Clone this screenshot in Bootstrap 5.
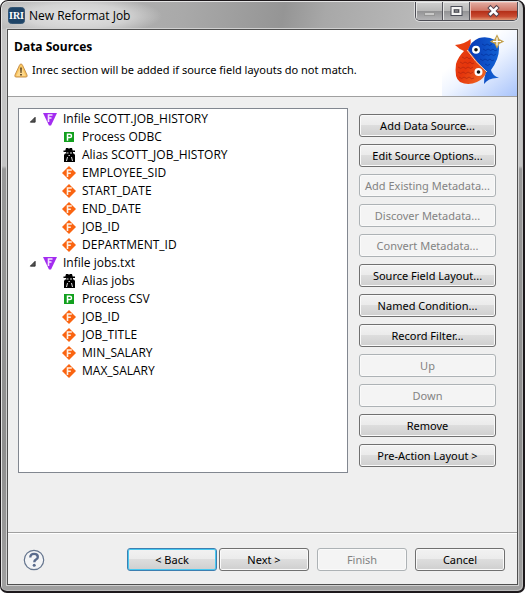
<!DOCTYPE html>
<html lang="en">
<head>
<meta charset="utf-8">
<meta name="viewport" content="width=device-width, initial-scale=1">
<title>New Reformat Job</title>
<link href="https://cdn.jsdelivr.net/npm/bootstrap@5.3.0/dist/css/bootstrap.min.css" rel="stylesheet">
<style>
  body { font-family: "Noto Sans", "Open Sans", sans-serif; font-size: 11px; line-height: 18px; color: #000; background: #fff; }
  .win-frame {
    border: 1px solid #1d191c; border-width: 1px 2px 2px 1px; border-radius: 8px 8px 7px 7px; padding: 0 5px 6px 6px;
    background: linear-gradient(180deg, #c4c4c4 0, #c4c4c4 165px, #999 168px, #8f8f8f 450px, #a0a0a0 100%);
    box-shadow: inset 1px 1px 0 #e4e4e4, inset -1px -1px 0 #bbb; overflow: hidden;
  }
  .title-bar {
    height: 27px; margin: 1px -4px 0 -5px; padding: 0 4px 0 6px; border-radius: 6px 6px 0 0;
    background: radial-gradient(ellipse 85px 20px at 75px 14px, #e2e2e2 0, #e2e2e2aa 60%, #e2e2e200 100%),
      linear-gradient(100deg, #bdbdbd 0, #a9a9a9 35%, #959595 54%, #a8a8a8 62%, #b9b9b9 80%, #c4c4c4 100%);
  }
  .title-text { font-family: "Open Sans", sans-serif; font-size: 12px; }
  .win-controls { height: 19px; border: 1px solid #4d4d55; border-top: 0; border-radius: 0 0 5px 5px; box-shadow: 0 0 0 1px #ddd; overflow: hidden; }
  .win-controls button { width: 27px; border: 0; border-right: 1px solid #55555c; padding: 0; background: linear-gradient(#d0d0d0 0, #b9b9b9 48%, #929294 50%, #b4b4b6 100%); box-shadow: inset 1px 1px 0 #e6e6e6; }
  .win-controls .win-close { width: 47px; border-right: 0; background: linear-gradient(#e2ada3 0, #cf7767 47%, #b32d17 50%, #c84b31 80%, #e09a79 100%); box-shadow: inset 1px 1px 0 #efbdb3; }
  .client { border: 1px solid #505050; background: #efefef; box-shadow: 0 0 0 1px #d0d0d0; }
  .banner { height: 67px; background: #fff; border-bottom: 1px solid #a0a0a0; padding: 8px 0 0 6px; }
  .banner h1 { font-family: "Open Sans", sans-serif; font-size: 12px; line-height: 18px; font-weight: 700; margin: 0 0 5px; }
  .banner-art { width: 75px; height: 66px; margin-top: -8px; }
  .content-area { padding: 11px 21px 59px 10px; gap: 11px; }
  .tree-box { border: 1px solid #828790; background: #fff; padding: 1px 0; min-width: 0; font-family: "Open Sans", sans-serif; font-size: 12px; }
  .tree-box ul { list-style: none; margin: 0; padding: 0; }
  .tree-row { height: 18px; gap: 6px; white-space: nowrap; }
  .tree-root { padding-left: 10px; }
  .tree-leaf { padding-left: 43px; }
  .tree-row svg { width: 14px; height: 14px; flex: none; }
  .twisty { width: 8px; height: 18px; border: 0; padding: 0; background: none; display: flex; align-items: center; }
  .tree-row .twisty svg { width: 7px; height: 7px; }
  .actions { width: 137px; flex: none; gap: 7px; padding-top: 6px; }
  .wbtn {
    height: 23px; padding: 0; font-size: 11px; line-height: 19px; color: #000; border: 1px solid #707070; border-radius: 3px;
    background: linear-gradient(#f2f2f2 0, #ebebeb 49%, #dddddd 50%, #cfcfcf 100%); box-shadow: inset 0 0 0 1px #fafafa; white-space: nowrap;
  }
  .wbtn:disabled { color: #838383; opacity: 1; border-color: #adb2b5; background: #f4f4f4; }
  .wbtn.default { border-color: #3c7fb1; box-shadow: inset 0 0 0 1px #48c8f0; }
  .footer-bar { border-top: 1px solid #a0a0a0; box-shadow: inset 0 1px 0 #fff; padding: 15px 12px 13px 15px; }
  .footer-bar .wbtn { width: 90px; }
  .back-next { gap: 2px; }
  .help-btn { width: 22px; height: 22px; border: 0; padding: 0; background: none; display: flex; }
</style>
<script src="https://cdn.jsdelivr.net/npm/bootstrap@5.3.0/dist/js/bootstrap.bundle.min.js"></script>
</head>
<body>
<svg width="0" height="0" class="position-absolute" aria-hidden="true">
  <symbol id="i-twisty" viewBox="0 0 8 8"><path d="M7 1.500V7H1.500z" fill="#555" stroke="#262626"/></symbol>
  <symbol id="i-infile" viewBox="0 0 14 14"><path d="M0 1h14L8 13.500H6z" fill="#a32cf0"/><path d="M5.500 10V3h4M5.500 6h3" fill="none" stroke="#f4e4ff" stroke-width="1.600"/></symbol>
  <symbol id="i-process" viewBox="0 0 14 14"><path d="M2 2h10v10H2z" fill="#12a01e"/><path d="M5.500 10.800V4.200h2.300a1.700 1.700 0 0 1 0 3.400H5.500" fill="none" stroke="#fff" stroke-width="1.500"/></symbol>
  <symbol id="i-alias" viewBox="0 0 14 14"><path d="M4 0h2l1 .7L8 0h2l.7 2.500H13V4h-2v1.500h1L13 7v7H2V7l1-1.500h1V4H1.500V2.500h1.800z" fill="#000"/><path d="M4.500 4.500h2v1h-2zM8 4.500h2v1H8zM6.300 7h1.700l-.3 1h-1zM5 9h1l-1 4H4zM9 9h1l1 4h-1z" fill="#ddd"/></symbol>
  <symbol id="i-field" viewBox="0 0 14 14"><path d="M7 0l7 7-7 7-7-7z" fill="#fa6411"/><path d="M5.500 11V4h4.300M5.500 7.200h3.300" fill="none" stroke="#fff0e4" stroke-width="1.600"/></symbol>
</svg>

<div class="win-frame min-vh-100 d-flex flex-column">
  <header class="title-bar d-flex align-items-start flex-shrink-0">
    <div class="d-flex align-items-center align-self-stretch flex-grow-1 gap-1">
      <svg width="17" height="17" viewBox="0 0 17 17" role="img" aria-label="IRI"><rect x=".5" y=".5" width="16" height="16" rx="3" fill="#1e4467" stroke="#345674"/><text x="8.500" y="12" text-anchor="middle" font-family="Liberation Serif, serif" font-weight="700" font-size="10" fill="#fff">IRI</text></svg>
      <span class="title-text">New Reformat Job</span>
    </div>
    <div class="win-controls d-flex">
      <button type="button" aria-label="Minimize"><svg class="d-block mx-auto" width="13" height="14" viewBox="0 0 13 14"><rect x="1.500" y="8.500" width="10" height="3" fill="#c9c9c9" stroke="#969696"/></svg></button>
      <button type="button" aria-label="Maximize"><svg class="d-block mx-auto" width="13" height="14" viewBox="0 0 13 14"><rect x="2.500" y="4" width="8" height="6" fill="none" stroke="#4a4c57" stroke-width="4"/><rect x="2.500" y="4" width="8" height="6" fill="#888" stroke="#f5f5f5" stroke-width="2"/><rect x="4.500" y="6" width="4" height="2" fill="#aaa" stroke="#4a4c57"/></svg></button>
      <button type="button" class="win-close" aria-label="Close"><svg class="d-block mx-auto" width="13" height="14" viewBox="0 0 13 14"><path d="M3.500 4l6 6M9.500 4l-6 6" stroke="#53434e" stroke-width="4.500" stroke-linecap="square"/><path d="M3.500 4l6 6M9.500 4l-6 6" stroke="#fff" stroke-width="2.600" stroke-linecap="square"/></svg></button>
    </div>
  </header>

  <main class="client d-flex flex-column flex-grow-1">
    <section class="banner d-flex justify-content-between">
      <div>
        <h1>Data Sources</h1>
        <div class="d-flex align-items-center gap-1">
          <svg width="14" height="15" viewBox="0 0 14 15" aria-hidden="true"><path d="M7 1Q8 1 8.500 2.200L13 12q.7 2-1 2H2q-1.700 0-1-2L5.500 2.200Q6 1 7 1z" fill="#fbc75e" stroke="#c8914c"/><path d="M7 3L2.500 13h9z" fill="#fff" opacity=".3"/><path d="M6.200 4.500h1.600L7.500 10h-1zM6.200 11h1.600v1.600H6.200z" fill="#4c3413"/></svg>
          <span>Inrec section will be added if source field layouts do not match.</span>
        </div>
      </div>
      <svg class="banner-art flex-shrink-0" viewBox="0 0 75 66" aria-hidden="true">
        <defs>
          <linearGradient id="sky" x1=".4" y1=".3" x2="1" y2="1"><stop offset="0" stop-color="#fff"/><stop offset=".3" stop-color="#eef4ff"/><stop offset="1" stop-color="#a9c4fb"/></linearGradient>
          <linearGradient id="redfish" x1="0" y1="0" x2="1" y2="1"><stop offset="0" stop-color="#ea4412"/><stop offset=".5" stop-color="#e5350c"/><stop offset="1" stop-color="#f37227"/></linearGradient>
          <linearGradient id="bluefish" x1="0" y1="0" x2="1" y2="0"><stop offset="0" stop-color="#0838b4"/><stop offset="1" stop-color="#1262d4"/></linearGradient>
        </defs>
        <path d="M0 0h75v66H0z" fill="url(#sky)"/>
        <path d="M13 15q10-1 15.500-6 1 6-2.500 11 8 11 19 21-3 8-10 11-9 4-17 0-6-4-4-18 2-7 8-13-5-2-9-6z" fill="url(#redfish)"/>
        <path d="M26 20q3-9 11-12 9-2 16 2 4 2 4 9 0 10-8 21 1 5 8 8-10-1-15 6 0-7 2-12Q35 32 26 20z" fill="url(#bluefish)"/>
        <path d="M25 20q8 12 20 22" fill="none" stroke="#ffd9ae" stroke-width="1"/>
        <g fill="none" stroke="#a9210d" stroke-width="1" opacity=".6"><path d="M20 27q3 3 5 0q2 3 4 1M18 32q3 3 5 0q3 3 5 0q2 3 4 1M16 37q3 3 5 0q3 3 5 0q3 3 5 0M16 42q3 3 5 0q3 3 5 0q3 3 5 0M17 47q3 3 5 0q3 3 5 0q3 3 5 1"/></g>
        <g fill="none" stroke="#002c92" stroke-width="1" opacity=".6"><path d="M40 14q3 3 5 0q3 3 5 0M41 19q3 3 5 0q3 3 5 0q2 3 4 1M39 24q3 3 5 0q3 3 5 0q3 3 5 0M38 29q3 3 5 0q3 3 5 0q2 3 4 1M43 34q3 3 5 0"/></g>
        <circle cx="34" cy="19.700" r="4" fill="#fff"/><circle cx="34" cy="19.700" r="1.800" fill="#111"/>
        <circle cx="36.500" cy="42" r="4" fill="#fff"/><circle cx="36.500" cy="42" r="1.800" fill="#111"/>
        <path d="M55 7l1.500 3 3 1.500-3 1.500-1.500 3-1.500-3-3-1.500 3-1.500z" fill="#fff5c4" stroke="#c3a14d" stroke-width="2.500"/><path d="M55 7.500v8M51 11.500h8" stroke="#fff" stroke-width="1.200"/>
      </svg>
    </section>

    <section class="content-area d-flex flex-grow-1">
      <div class="tree-box flex-grow-1">
        <ul>
          <li>
            <div class="tree-row tree-root d-flex align-items-center"><button type="button" class="twisty" aria-label="Collapse Infile SCOTT.JOB_HISTORY"><svg><use href="#i-twisty"/></svg></button><svg><use href="#i-infile"/></svg><span>Infile SCOTT.JOB_HISTORY</span></div>
            <ul>
              <li class="tree-row tree-leaf d-flex align-items-center"><svg><use href="#i-process"/></svg><span>Process ODBC</span></li>
              <li class="tree-row tree-leaf d-flex align-items-center"><svg><use href="#i-alias"/></svg><span>Alias SCOTT_JOB_HISTORY</span></li>
              <li class="tree-row tree-leaf d-flex align-items-center"><svg><use href="#i-field"/></svg><span>EMPLOYEE_SID</span></li>
              <li class="tree-row tree-leaf d-flex align-items-center"><svg><use href="#i-field"/></svg><span>START_DATE</span></li>
              <li class="tree-row tree-leaf d-flex align-items-center"><svg><use href="#i-field"/></svg><span>END_DATE</span></li>
              <li class="tree-row tree-leaf d-flex align-items-center"><svg><use href="#i-field"/></svg><span>JOB_ID</span></li>
              <li class="tree-row tree-leaf d-flex align-items-center"><svg><use href="#i-field"/></svg><span>DEPARTMENT_ID</span></li>
            </ul>
          </li>
          <li>
            <div class="tree-row tree-root d-flex align-items-center"><button type="button" class="twisty" aria-label="Collapse Infile jobs.txt"><svg><use href="#i-twisty"/></svg></button><svg><use href="#i-infile"/></svg><span>Infile jobs.txt</span></div>
            <ul>
              <li class="tree-row tree-leaf d-flex align-items-center"><svg><use href="#i-alias"/></svg><span>Alias jobs</span></li>
              <li class="tree-row tree-leaf d-flex align-items-center"><svg><use href="#i-process"/></svg><span>Process CSV</span></li>
              <li class="tree-row tree-leaf d-flex align-items-center"><svg><use href="#i-field"/></svg><span>JOB_ID</span></li>
              <li class="tree-row tree-leaf d-flex align-items-center"><svg><use href="#i-field"/></svg><span>JOB_TITLE</span></li>
              <li class="tree-row tree-leaf d-flex align-items-center"><svg><use href="#i-field"/></svg><span>MIN_SALARY</span></li>
              <li class="tree-row tree-leaf d-flex align-items-center"><svg><use href="#i-field"/></svg><span>MAX_SALARY</span></li>
            </ul>
          </li>
        </ul>
      </div>
      <div class="actions d-flex flex-column">
        <button type="button" class="btn wbtn">Add Data Source...</button>
        <button type="button" class="btn wbtn">Edit Source Options...</button>
        <button type="button" class="btn wbtn" disabled>Add Existing Metadata...</button>
        <button type="button" class="btn wbtn" disabled>Discover Metadata...</button>
        <button type="button" class="btn wbtn" disabled>Convert Metadata...</button>
        <button type="button" class="btn wbtn">Source Field Layout...</button>
        <button type="button" class="btn wbtn">Named Condition...</button>
        <button type="button" class="btn wbtn">Record Filter...</button>
        <button type="button" class="btn wbtn" disabled>Up</button>
        <button type="button" class="btn wbtn" disabled>Down</button>
        <button type="button" class="btn wbtn">Remove</button>
        <button type="button" class="btn wbtn">Pre-Action Layout &gt;</button>
      </div>
    </section>

    <footer class="footer-bar d-flex align-items-center gap-2">
      <button type="button" class="help-btn me-auto" aria-label="Help"><svg width="22" height="22" viewBox="0 0 22 22"><circle cx="11" cy="11" r="9.700" fill="#f3f4f6" stroke="#66768f" stroke-width="1.200"/><path d="M7.300 8.500q0-3.600 3.800-3.600 3.700 0 3.700 3 0 1.600-1.800 2.700-1.700 1-1.700 2.700" fill="none" stroke="#5a6b8c" stroke-width="2.400"/><circle cx="11.200" cy="16.300" r="1.500" fill="#5a6b8c"/></svg></button>
      <div class="d-flex back-next">
        <button type="button" class="btn wbtn default">&lt; Back</button>
        <button type="button" class="btn wbtn">Next &gt;</button>
      </div>
      <button type="button" class="btn wbtn" disabled>Finish</button>
      <button type="button" class="btn wbtn">Cancel</button>
    </footer>
  </main>
</div>
</body>
</html>
